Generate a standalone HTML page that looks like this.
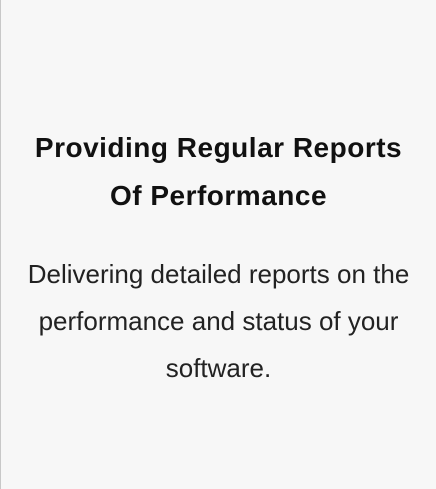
<!DOCTYPE html>
<html><head><style>
html,body{margin:0;padding:0;}
body{width:436px;height:489px;background:#f7f7f7;border-left:1px solid #c8c8c8;box-sizing:border-box;font-family:"Liberation Sans",sans-serif;overflow:hidden;}
h2{margin:0;position:absolute;top:124px;left:1px;width:435px;text-align:center;font-size:28px;line-height:48px;font-weight:bold;color:#111;letter-spacing:0.5px;white-space:nowrap;}
p{margin:0;position:absolute;top:251px;left:1px;width:435px;text-align:center;font-size:26px;line-height:47px;color:#222;white-space:nowrap;}
</style></head><body>
<h2>Providing Regular Reports<br>Of Performance</h2>
<p>Delivering detailed reports on the<br>performance and status of your<br>software.</p>
</body></html>
